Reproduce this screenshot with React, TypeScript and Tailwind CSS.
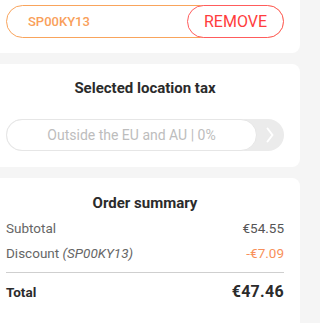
import React from "react";

export default function App() {
  return (
    <div
      className="w-[320px] h-[323px] overflow-hidden bg-[#f5f5f5]"
      style={{ fontFamily: "Roboto, 'Liberation Sans', sans-serif" }}
    >
      <div className="w-[300px] flex flex-col gap-[11px]">
        {/* Coupon card */}
        <div className="bg-white rounded-br-[8px] pt-[5px] pb-[15px] pl-[6px] pr-[16px]">
          <div className="relative h-[33px] rounded-full border border-[#f9a45c] flex items-center">
            <span className="pl-[21px] text-[13px] font-medium text-[#f9a05a]">
              SP00KY13
            </span>
            <button className="absolute right-[-1px] top-[-1px] h-[33px] w-[97px] rounded-full border border-[#ff5c5c] bg-white flex items-center justify-center text-[16px] text-[#ff3d3d]">
              REMOVE
            </button>
          </div>
        </div>

        {/* Tax card */}
        <div className="bg-white rounded-r-[8px] pt-[14px] pb-[16px] pl-[6px] pr-[16px] flex flex-col">
          <div className="text-center text-[15px] leading-[20px] font-bold text-[#2b2b2b]">
            Selected location tax
          </div>
          <div className="mt-[21px] h-[32px] rounded-full bg-[#ebebeb] flex items-stretch">
            <div className="flex-1 rounded-full bg-white border border-[#e6e6e6] flex items-center justify-center text-[14px] text-[#bdbdbd]">
              Outside the EU and AU | 0%
            </div>
            <div className="w-[27px] flex items-center justify-start pl-[9px]">
              <svg width="8" height="16" viewBox="0 0 8 16" fill="none">
                <polyline
                  points="1.5,1.5 6.5,8 1.5,14.5"
                  stroke="#ffffff"
                  strokeWidth="2"
                  strokeLinecap="round"
                  strokeLinejoin="round"
                />
              </svg>
            </div>
          </div>
        </div>

        {/* Order summary */}
        <div className="bg-white rounded-tr-[8px] pt-[15px] pb-[30px] pl-[6px] pr-[16px] flex flex-col">
          <div className="text-center text-[15px] leading-[20px] font-bold text-[#2b2b2b]">
            Order summary
          </div>
          <div className="mt-[5px] flex justify-between text-[13.5px] leading-[20px] text-[#666]">
            <span>Subtotal</span>
            <span className="text-[#555]">€54.55</span>
          </div>
          <div className="mt-[5px] flex justify-between text-[13.5px] leading-[20px] text-[#666]">
            <span>
              Discount <i>(SP00KY13)</i>
            </span>
            <span className="text-[#f8905a]">-€7.09</span>
          </div>
          <div className="mt-[9px] h-px bg-[#cfcfcf]" />
          <div className="mt-[7px] h-[24px] flex justify-between items-center text-[#2b2b2b]">
            <span className="text-[13.5px] font-bold">Total</span>
            <span className="text-[16px] font-bold tracking-[0.3px]">€47.46</span>
          </div>
        </div>
      </div>
    </div>
  );
}
